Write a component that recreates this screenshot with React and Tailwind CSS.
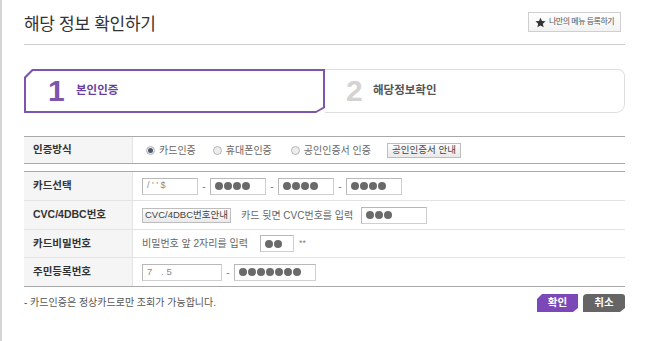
import React from 'react';

const Dots = ({ n }) => (
  <span className="flex items-center gap-[1px]">
    {Array.from({ length: n }).map((_, i) => (
      <span key={i} className="w-[8px] h-[8px] rounded-full bg-[#6a6a6a]" />
    ))}
  </span>
);

const Box = ({ w, children }) => (
  <span className={`flex items-center h-[17px] border border-[#cfcfcf] border-t-[#b8b8b8] border-l-[#b8b8b8] px-[4px] bg-white ${w}`}>
    {children}
  </span>
);

const Dash = () => <span className="w-[12px] text-center text-[#777] text-[10px]">-</span>;

const Radio = ({ checked, label }) => (
  <span className="flex items-center">
    <span className="flex items-center justify-center w-[9px] h-[9px] rounded-full border border-[#b5b5b5] bg-[#ededed] mr-[4px]">
      {checked && <span className="w-[5px] h-[5px] rounded-full bg-[#4a5a70]" />}
    </span>
    <span>{label}</span>
  </span>
);

const SmallBtn = ({ w, children }) => (
  <span className={`flex items-center justify-center h-[15px] border border-[#bdbdbd] bg-gradient-to-b from-[#fdfdfd] to-[#e9e9e9] text-[9.5px] text-[#444] whitespace-nowrap ${w}`}>
    {children}
  </span>
);

const Row = ({ label, h, last, children }) => (
  <div className={`flex ${h} ${last ? '' : 'border-b border-[#e3e3e3]'}`}>
    <div className="w-[109px] shrink-0 bg-[#f5f5f5] border-r border-[#e3e3e3] pl-[9px] flex items-center text-[10.5px] font-bold text-[#333]">
      {label}
    </div>
    <div className="flex-1 flex items-center pl-[9px] text-[10px] text-[#666] whitespace-nowrap">{children}</div>
  </div>
);

export default function App() {
  return (
    <div className="w-[650px] h-[341px] bg-white border-l-2 border-[#d4d4d4] pl-[22px] pr-[25px] font-['Liberation_Sans','Noto_Sans_CJK_KR',sans-serif] overflow-hidden">
      {/* title */}
      <div className="h-[45px] border-b border-[#cccccc] flex justify-between items-start">
        <h1 className="pt-[14px] text-[17px] leading-[22px] text-[#333] tracking-[-0.3px]">해당 정보 확인하기</h1>
        <span className="mt-[12px] mr-[4px] flex items-center h-[20px] w-[93px] border border-[#cfcfcf] bg-gradient-to-b from-white to-[#f2f2f2] pl-[6px] text-[8px] text-[#555] tracking-[-0.5px] whitespace-nowrap">
          <svg width="11" height="11" viewBox="0 0 24 24" className="mr-[3px] shrink-0">
            <path d="M12 1.5l3.2 7.1 7.8.8-5.9 5.2 1.7 7.7L12 18.3l-6.8 4 1.7-7.7L1 9.4l7.8-.8z" fill="#333" />
          </svg>
          나만의 메뉴 등록하기
        </span>
      </div>

      {/* steps */}
      <div className="mt-[24px] flex h-[44px]">
        <div className="w-[301px] bg-[#7d55ab] p-[2px] [clip-path:polygon(8px_0,100%_0,100%_calc(100%_-_5px),calc(100%_-_9px)_100%,0_100%,0_8px)]">
          <div className="h-full bg-white flex items-center pl-[22px] [clip-path:polygon(7px_0,100%_0,100%_calc(100%_-_4px),calc(100%_-_7px)_100%,0_100%,0_7px)]">
            <span className="text-[30px] font-bold text-[#7d55ab] leading-none w-[28px]">1</span>
            <span className="text-[11.5px] font-bold text-[#6b3fa0]">본인인증</span>
          </div>
        </div>
        <div className="flex-1 border-y border-r border-[#dedede] rounded-tr-[7px] rounded-br-[9px] flex items-center pl-[21px]">
          <span className="text-[30px] font-bold text-[#d3d3d3] leading-none w-[27px]">2</span>
          <span className="text-[11.5px] font-bold text-[#555]">해당정보확인</span>
        </div>
      </div>

      {/* table 1 */}
      <div className="mt-[23px] border-t border-b border-[#a9a9a9]">
        <Row label="인증방식" h="h-[26px]" last>
          <div className="flex items-center pl-[4px]">
            <Radio checked label="카드인증" />
            <span className="ml-[17px]"><Radio label="휴대폰인증" /></span>
            <span className="ml-[19px]"><Radio label="공인인증서 인증" /></span>
            <span className="ml-[16px]"><SmallBtn w="w-[74px]">공인인증서 안내</SmallBtn></span>
          </div>
        </Row>
      </div>

      {/* table 2 */}
      <div className="mt-[7px] border-t border-b border-[#a9a9a9]">
        <Row label="카드선택" h="h-[29px]">
          <Box w="w-[56px]"><span className="text-[#888] text-[9px]">/ ' ' $</span></Box>
          <Dash />
          <Box w="w-[56px]"><Dots n={4} /></Box>
          <Dash />
          <Box w="w-[56px]"><Dots n={4} /></Box>
          <Dash />
          <Box w="w-[56px]"><Dots n={4} /></Box>
        </Row>
        <Row label="CVC/4DBC번호" h="h-[29px]">
          <SmallBtn w="w-[89px]">CVC/4DBC번호안내</SmallBtn>
          <span className="ml-[10px]">카드 뒷면 CVC번호를 입력</span>
          <span className="ml-[8px]"><Box w="w-[66px]"><Dots n={3} /></Box></span>
        </Row>
        <Row label="카드비밀번호" h="h-[28px]">
          <span>비밀번호 앞 2자리를 입력</span>
          <span className="ml-[12px]"><Box w="w-[34px]"><Dots n={2} /></Box></span>
          <span className="ml-[5px] text-[#888] text-[9px]">**</span>
        </Row>
        <Row label="주민등록번호" h="h-[28px]" last>
          <Box w="w-[80px]"><span className="text-[#888] text-[9.5px] tracking-[3px]">7 .5</span></Box>
          <Dash />
          <Box w="w-[82px]"><Dots n={7} /></Box>
        </Row>
      </div>

      {/* footer */}
      <div className="mt-[7px] flex justify-between items-start">
        <p className="pt-[1px] text-[10px] text-[#555]">- 카드인증은 정상카드로만 조회가 가능합니다.</p>
        <div className="flex gap-[5px]">
          <span className="w-[41px] h-[18px] flex items-center justify-center bg-[#7c48b8] text-white text-[10.5px] font-bold [clip-path:polygon(5px_0,100%_0,100%_calc(100%_-_4px),calc(100%_-_5px)_100%,0_100%,0_5px)]">확인</span>
          <span className="w-[42px] h-[18px] flex items-center justify-center bg-[#656565] text-white text-[10.5px] font-bold rounded-tl-[4px] rounded-tr-[3px] [clip-path:polygon(0_0,100%_0,100%_calc(100%_-_4px),calc(100%_-_5px)_100%,0_100%)]">취소</span>
        </div>
      </div>
    </div>
  );
}
